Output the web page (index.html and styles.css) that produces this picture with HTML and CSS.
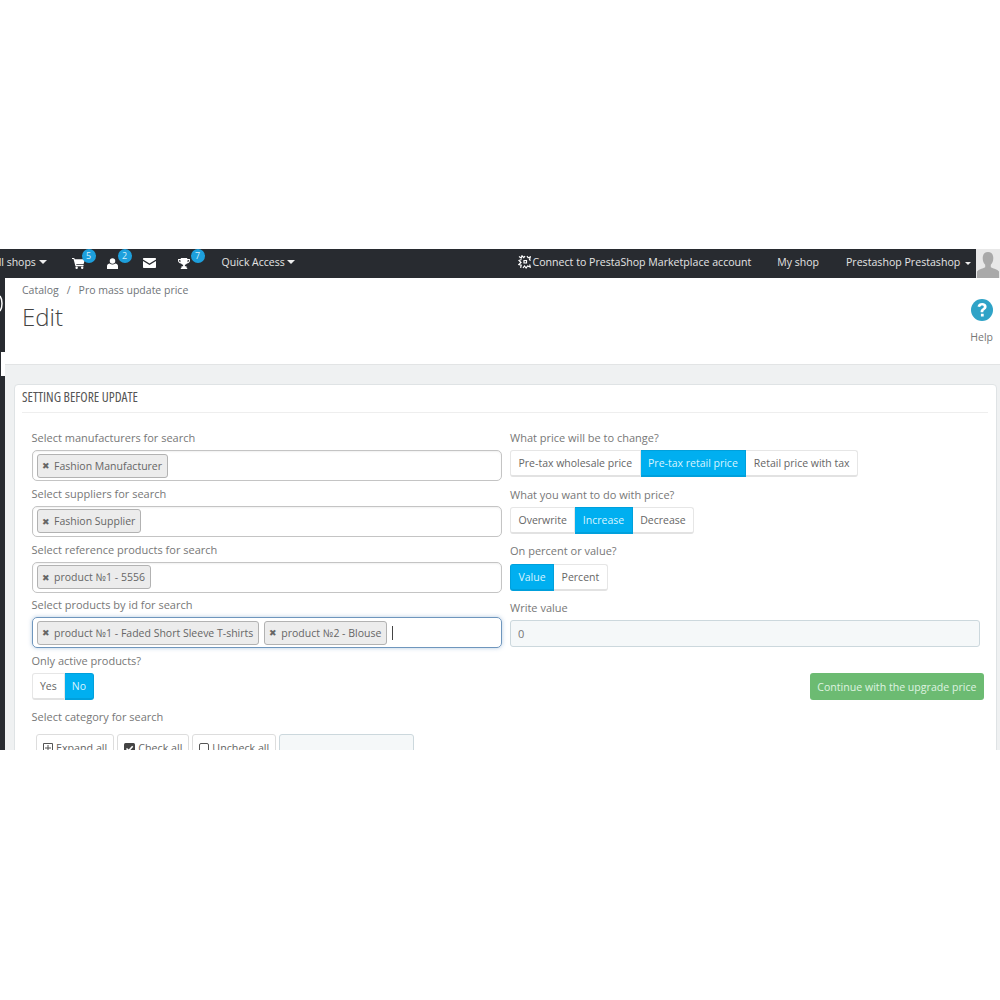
FILE: index.html
```html
<!DOCTYPE html>
<html>
<head>
  <meta charset="utf-8">
  <link rel="stylesheet" href="styles.css">
</head>
<body>

<div class="shot">
  <nav class="topbar">
    <span class="shops">All shops <i class="caret"></i></span>
    <span class="ico ico-cart">
      <svg width="13" height="12" viewBox="0 0 14 13"><path fill="#fff" d="M0 1h2.400l.5 1.400H14l-1.500 5.400H4.500l.3 1H12.500v1.200H3.700L1.600 2.200H0z"/><circle cx="5" cy="11.600" r="1.300" fill="#fff"/><circle cx="11" cy="11.600" r="1.300" fill="#fff"/></svg>
      <b class="badge">5</b>
    </span>
    <span class="ico ico-user">
      <svg width="11" height="11" viewBox="0 0 12 12"><circle cx="6" cy="3.200" r="3" fill="#fff"/><path fill="#fff" d="M0 12V8.800C0 7 1.500 6 3 6c.8.700 1.800 1 3 1s2.200-.3 3-1c1.500 0 3 1 3 2.800V12z"/></svg>
      <b class="badge">2</b>
    </span>
    <span class="ico ico-mail">
      <svg width="13" height="10" viewBox="0 0 13 10"><path fill="#fff" d="M1 0h11c.6 0 1 .4 1 1v.4L6.500 5.600 0 1.400V1c0-.6.400-1 1-1zM0 2.900l6.500 4.200L13 2.900V9c0 .6-.4 1-1 1H1c-.6 0-1-.4-1-1z"/></svg>
    </span>
    <span class="ico ico-trophy">
      <svg width="12" height="11" viewBox="0 0 13 12"><path fill="#fff" d="M3 0h7v1h3v1.600C13 4.500 11.500 5.700 9.700 5.900 9.100 6.700 8.300 7.200 7.500 7.400V9h1.700v1.500H10V12H3v-1.500h.8V9h1.700V7.400C4.700 7.200 3.900 6.700 3.300 5.900 1.500 5.700 0 4.500 0 2.600V1h3zM1.200 2.200v.5c0 1 .7 1.700 1.600 2-.2-.7-.3-1.600-.3-2.500zm10.600 0h-1.300c0 .9-.1 1.800-.3 2.500.9-.3 1.600-1 1.600-2z"/></svg>
      <b class="badge">7</b>
    </span>
    <span class="quick">Quick Access <i class="caret"></i></span>
    <span class="connect">
      <svg width="13" height="14" viewBox="0 0 13 14"><g fill="none" stroke="#fff" stroke-width="1.200"><path d="M1 1.500 3.200 3 4 .8 5.800 2.600 7 1"/><path d="M9 1.200l1.200 1.600L12.300 2l-.8 2.500 1 1.200"/><path d="M3.500 4.500 1 5.500 3 7.500.8 9.500l2.400.6-.6 2.700"/><path d="M5 13l1.500-2 1.600 2 1.500-2 2.600 1-.5-2.500"/><path d="M6 5.500h2.500V8H6z"/></g></svg>
      <span>Connect to PrestaShop Marketplace account</span>
    </span>
    <span class="myshop">My shop</span>
    <span class="employee">Prestashop Prestashop <i class="caret caret-small"></i></span>
    <span class="avatar">
      <svg width="24" height="29" viewBox="0 0 24 29"><rect width="24" height="29" fill="#e8e8e8"/><path fill="#a9a9a9" d="M12 3c3.600 0 5.300 2.700 5.300 6.200 0 2.700-1 5.200-2.500 6.600v2.400c2.500 1.300 6.500 2 8.200 4.300V29H1v-6.500c1.700-2.300 5.700-3 8.200-4.300v-2.400C7.700 14.400 6.700 11.900 6.700 9.200 6.700 5.700 8.400 3 12 3z"/></svg>
    </span>
  </nav>

  <div class="layout">
    <aside class="sidebar">
      <svg class="arc" width="4" height="17" viewBox="0 0 4 17"><path fill="none" stroke="#fff" stroke-width="1.500" d="M0 1c1.500 2 2 5 2 7.500S1.500 14 0 16"/></svg>
      <span class="notch"></span>
    </aside>

    <div class="content">
      <header class="pagehead">
        <div>
          <div class="crumbs"><span>Catalog</span><span class="sep">/</span><span>Pro mass update price</span></div>
          <h1>Edit</h1>
        </div>
        <div class="help">
          <svg width="22" height="22" viewBox="0 0 22 22"><circle cx="11" cy="11" r="11" fill="#2fa3c7"/><path fill="#fff" d="M11.200 4C8.700 4 7 5.200 6.500 7.400l2.600.7c.3-1 1-1.600 2-1.600s1.700.5 1.700 1.300c0 .7-.5 1.100-1.300 1.700-1.100.8-1.900 1.500-1.900 3v.7h2.700v-.5c0-.7.4-1 1.200-1.600 1.100-.8 2.100-1.700 2.100-3.500C15.600 5.400 13.700 4 11.200 4zM9.900 14.800h2.800v2.800H9.900z"/></svg>
          <span>Help</span>
        </div>
      </header>

      <div class="graybox">
        <section class="panel">
          <h2 class="panel-title">SETTING BEFORE UPDATE</h2>
          <div class="columns">
            <div class="col-left">
              <label class="lbl">Select manufacturers for search</label>
              <div class="tagfield"><span class="tag"><i>✖</i>Fashion Manufacturer</span></div>

              <label class="lbl">Select suppliers for search</label>
              <div class="tagfield"><span class="tag"><i>✖</i>Fashion Supplier</span></div>

              <label class="lbl">Select reference products for search</label>
              <div class="tagfield"><span class="tag"><i>✖</i>product №1 - 5556</span></div>

              <label class="lbl">Select products by id for search</label>
              <div class="tagfield focused">
                <span class="tag"><i>✖</i>product №1 - Faded Short Sleeve T-shirts</span>
                <span class="tag"><i>✖</i>product №2 - Blouse</span>
                <span class="cursor"></span>
              </div>

              <label class="lbl">Only active products?</label>
              <div class="btngroup small">
                <button type="button">Yes</button>
                <button type="button" class="on">No</button>
              </div>

              <label class="lbl lbl-cat">Select category for search</label>
              <div class="treebar">
                <button type="button" class="treebtn">
                  <svg width="10" height="10" viewBox="0 0 10 10"><path fill="none" stroke="#555" d="M.5.500h9v9h-9zM5 2v6M2 5h6"/></svg>
                  Expand all
                </button>
                <button type="button" class="treebtn">
                  <svg width="11" height="11" viewBox="0 0 11 11"><rect width="11" height="11" rx="1.500" fill="#444"/><path fill="none" stroke="#fff" stroke-width="1.600" d="M2.500 5.500l2.200 2.200 4-4.500"/></svg>
                  Check all
                </button>
                <button type="button" class="treebtn">
                  <svg width="10" height="11" viewBox="0 0 10 11"><rect x=".5" y=".5" width="9" height="10" rx="1.500" fill="none" stroke="#555"/></svg>
                  Uncheck all
                </button>
                <div class="treesearch"></div>
              </div>
            </div>

            <div class="col-right">
              <label class="lbl">What price will be to change?</label>
              <div class="btngroup">
                <button type="button">Pre-tax wholesale price</button>
                <button type="button" class="on">Pre-tax retail price</button>
                <button type="button">Retail price with tax</button>
              </div>

              <label class="lbl">What you want to do with price?</label>
              <div class="btngroup">
                <button type="button">Overwrite</button>
                <button type="button" class="on">Increase</button>
                <button type="button">Decrease</button>
              </div>

              <label class="lbl">On percent or value?</label>
              <div class="btngroup">
                <button type="button" class="on">Value</button>
                <button type="button">Percent</button>
              </div>

              <label class="lbl">Write value</label>
              <input class="valuebox" type="text" value="0">

              <div class="actions">
                <button type="button" class="greenbtn">Continue with the upgrade price</button>
              </div>
            </div>
          </div>
        </section>
      </div>
    </div>
  </div>
</div>

</body>
</html>
```

FILE: styles.css
```css
* {box-sizing: border-box}

body {
  margin: 0;
  background: #fff;
  font-family: "Open Sans", Arial, sans-serif;
  font-size: 11px;
  color: #666;
}

.shot {
  margin-top: 249px;
  height: 501px;
  overflow: hidden;
}

/* top bar */
.topbar {
  display: flex;
  align-items: flex-start;
  height: 29px;
  background: #282b30;
  color: #e4e4e4;
  font-size: 10.500px;
  line-height: 26px;
  white-space: nowrap;
}

.caret {
  display: inline-block;
  width: 0;
  height: 0;
  margin-left: 0;
  vertical-align: 2px;
  border-left: 4px solid transparent;
  border-right: 4px solid transparent;
  border-top: 4px solid #eee;
}

.caret-small {
  margin-left: 2px;
  border-width: 3px 3.500px 0;
  vertical-align: 1px;
}

.shops {margin-left: -8px}

.ico {
  position: relative;
  display: flex;
  align-items: center;
  height: 28px;
}

.ico-cart {margin-left: 25px}
.ico-user {margin-left: 22px}
.ico-mail {margin-left: 25px}
.ico-trophy {margin-left: 22px}

.badge {
  position: absolute;
  top: 0;
  left: 10px;
  width: 14px;
  height: 14px;
  border-radius: 50%;
  background: #1d9fdc;
  color: #d5effa;
  font-size: 9px;
  font-weight: normal;
  line-height: 14px;
  text-align: center;
}

.ico-cart .badge {left: 10px}
.ico-user .badge {left: 11px}
.ico-trophy .badge {left: 13px}

.quick {margin-left: 32px}

.connect {
  display: flex;
  align-items: center;
  gap: 2px;
  height: 26px;
  margin-left: auto;
  font-size: 10.600px;
}

.myshop {margin-left: 26px}

.employee {
  margin-left: 27px;
  font-size: 10.600px;
}

.avatar {
  display: block;
  height: 29px;
  margin-left: 5px;
}

.avatar svg {display: block}

/* page frame */
.layout {display: flex}

.sidebar {
  flex: 0 0 4px;
  height: 472px;
  background: #282b30;
}

.arc {
  display: block;
  margin-top: 17px;
}

.notch {
  display: block;
  width: 4px;
  height: 24px;
  margin: 40px 0 0 1px;
  background: #fff;
}

.content {
  flex: 1;
  min-width: 0;
}

.pagehead {
  display: flex;
  justify-content: space-between;
  height: 87px;
  padding: 6px 7px 0 18px;
  background: #fff;
  border-bottom: 1px solid #e2e4e5;
}

.crumbs {
  display: flex;
  gap: 8px;
  margin-left: -1px;
  font-size: 10.500px;
  line-height: 13px;
  color: #6f7478;
}

.pagehead h1 {
  margin: 4px 0 0 -1px;
  font-size: 24px;
  font-weight: 300;
  line-height: 32px;
  color: #444;
}

.help {
  display: flex;
  flex-direction: column;
  align-items: center;
  gap: 9px;
  padding-top: 15px;
  font-size: 10.500px;
  line-height: 14px;
  color: #777;
}

.graybox {
  height: 385px;
  padding: 19px 3px 0 9px;
  background: #eff1f2;
}

.panel {
  height: 400px;
  background: #fff;
  border: 1px solid #dfe3e5;
  border-radius: 4px;
}

.panel-title {
  height: 28px;
  margin: 0 8px 0 7px;
  border-bottom: 1px solid #eee;
  font-size: 13.500px;
  font-stretch: condensed;
  font-weight: normal;
  line-height: 25px;
  color: #555;
}

.columns {
  display: flex;
  padding: 16px 0 0 16px;
}

.col-left {
  flex: 0 0 470px;
  margin-left: 1px;
}

.col-right {
  flex: 0 0 474px;
  margin-left: 8px;
}

.lbl {
  display: block;
  height: 18px;
  margin-bottom: 3px;
  font-size: 11px;
  line-height: 18px;
  color: #777;
}

.col-left .lbl {margin-left: -.5px}

.col-right .lbl {margin-bottom: 3.400px}

/* tag inputs */
.tagfield {
  display: flex;
  align-items: center;
  gap: 5px;
  height: 31px;
  margin-bottom: 3.800px;
  padding: 0 5px 0 4px;
  border: 1px solid #c4c4c4;
  border-radius: 5px;
  box-shadow: inset 0 1px 2px rgba(0, 0, 0, .06);
}

.tagfield.focused {
  border-color: #6f96bd;
  box-shadow: 0 0 4px rgba(90, 140, 190, .45);
}

.tag {
  display: flex;
  align-items: center;
  height: 24px;
  padding: 0 5px 0 4px;
  background: #ececec;
  border: 1px solid #b2b2b2;
  border-radius: 3px;
  font-size: 10.500px;
  color: #666;
  white-space: nowrap;
}

.tag i {
  width: 12px;
  font-size: 9px;
  font-style: normal;
  color: #666;
}

.cursor {
  width: 1px;
  height: 14px;
  background: #444;
}

/* button groups */
.btngroup {
  display: flex;
  height: 27px;
  margin-bottom: 8.200px;
}

.btngroup.small {margin-bottom: 3px}

.btngroup.small button {padding: 0 7px}

.btngroup button {
  height: 27px;
  padding: 0 7.500px;
  background: #fff;
  border: 1px solid #e6e6e6;
  border-bottom: 2px solid #e2e2e2;
  font-family: inherit;
  font-size: 10.500px;
  color: #666;
}

.btngroup button + button {border-left: 0}

.btngroup button:first-child {border-radius: 3px 0 0 3px}
.btngroup button:last-child {border-radius: 0 3px 3px 0}

.btngroup button.on {
  background: #00aff0;
  border-color: #00a0dc;
  color: #d8f4ff;
}

.valuebox {
  display: block;
  width: 470px;
  height: 27px;
  padding: 0 7px;
  background: #f5f8f9;
  border: 1px solid #ccd8dd;
  border-radius: 3px;
  font-family: inherit;
  font-size: 11px;
  color: #777;
}

.actions {
  display: flex;
  justify-content: flex-end;
  width: 474px;
  margin-top: 26px;
}

.greenbtn {
  height: 27px;
  padding: 0 7.500px;
  background: #6cbb72;
  border: 0;
  border-radius: 3px;
  font-family: inherit;
  font-size: 10.600px;
  color: #dff3e0;
}

.lbl-cat {margin-top: 8px}

/* category tree toolbar */
.treebar {
  display: flex;
  gap: 3px;
  margin: 8px 0 0 4px;
}

.treebtn {
  display: flex;
  align-items: center;
  gap: 3px;
  height: 28px;
  padding: 0 6px;
  background: #fff;
  border: 1px solid #ddd;
  border-radius: 3px;
  font-family: inherit;
  font-size: 10.700px;
  color: #666;
}

.treesearch {
  width: 135px;
  height: 30px;
  background: #f5f8f9;
  border: 1px solid #ccd8dd;
  border-radius: 3px;
}
```
